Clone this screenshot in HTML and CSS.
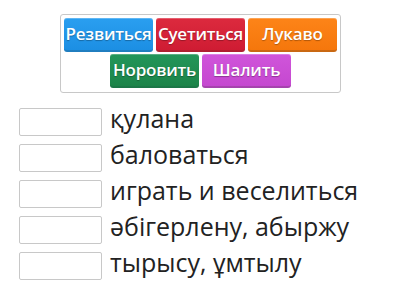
FILE: index.html
```html
<!DOCTYPE html>
<html lang="ru">
<head>
    <meta charset="UTF-8">
    <title>Сопоставление</title>
    <link rel="stylesheet" href="styles.css">
</head>
<body>

<div class="bank">
    <div class="word blue">Резвиться</div>
    <div class="word red">Суетиться</div>
    <div class="word orange">Лукаво</div>
    <div class="word green">Норовить</div>
    <div class="word purple">Шалить</div>
</div>

<div class="rows">
    <div class="row"><span class="slot"></span><span class="clue">қулана</span></div>
    <div class="row"><span class="slot"></span><span class="clue">баловаться</span></div>
    <div class="row"><span class="slot"></span><span class="clue">играть и веселиться</span></div>
    <div class="row"><span class="slot"></span><span class="clue">әбігерлену, абыржу</span></div>
    <div class="row"><span class="slot"></span><span class="clue">тырысу, ұмтылу</span></div>
</div>

</body>
</html>
```

FILE: styles.css
```css
body {
    margin: 0;
    font-family: "Open Sans", "Noto Sans", sans-serif;
    background: #fff;
    color: #222;
}
.bank {
    box-sizing: border-box;
    width: 281px;
    margin: 14px 0 0 60px;
    padding: 3px 3px 4px;
    border: 1px solid #c8c8c8;
    border-radius: 3px;
    display: flex;
    flex-wrap: wrap;
    justify-content: center;
    gap: 2px 3px;
}
.word {
    box-sizing: border-box;
    width: 89px;
    height: 34px;
    border-radius: 3px;
    color: #fff;
    font-size: 17px;
    font-weight: 600;
    line-height: 32px;
    text-align: center;
    white-space: nowrap;
    letter-spacing: -0.2px;
    text-shadow: 0 1px 1px rgba(0,0,0,0.3);
    border-bottom: 2px solid rgba(0,0,0,0.2);
    box-shadow: inset 0 1px 0 rgba(255,255,255,0.25);
}
.blue { background: linear-gradient(#2a9ff0, #1c8fe3); }
.red { background: linear-gradient(#dc2a3e, #cf1c33); }
.orange { background: linear-gradient(#fd8418, #f5770c); }
.green { background: linear-gradient(#23965a, #1c8449); }
.purple { background: linear-gradient(#d055da, #c548d0); }
.rows {
    margin: 15px 0 0 19px;
    display: flex;
    flex-direction: column;
    gap: 8px;
}
.row {
    display: flex;
    align-items: flex-start;
    gap: 8px;
    height: 28px;
}
.slot {
    box-sizing: border-box;
    width: 83px;
    height: 28px;
    border: 1px solid #c8c8c8;
    border-radius: 2px;
}
.clue {
    font-size: 25px;
    line-height: 28px;
    margin-top: -4px;
    white-space: nowrap;
}
```
